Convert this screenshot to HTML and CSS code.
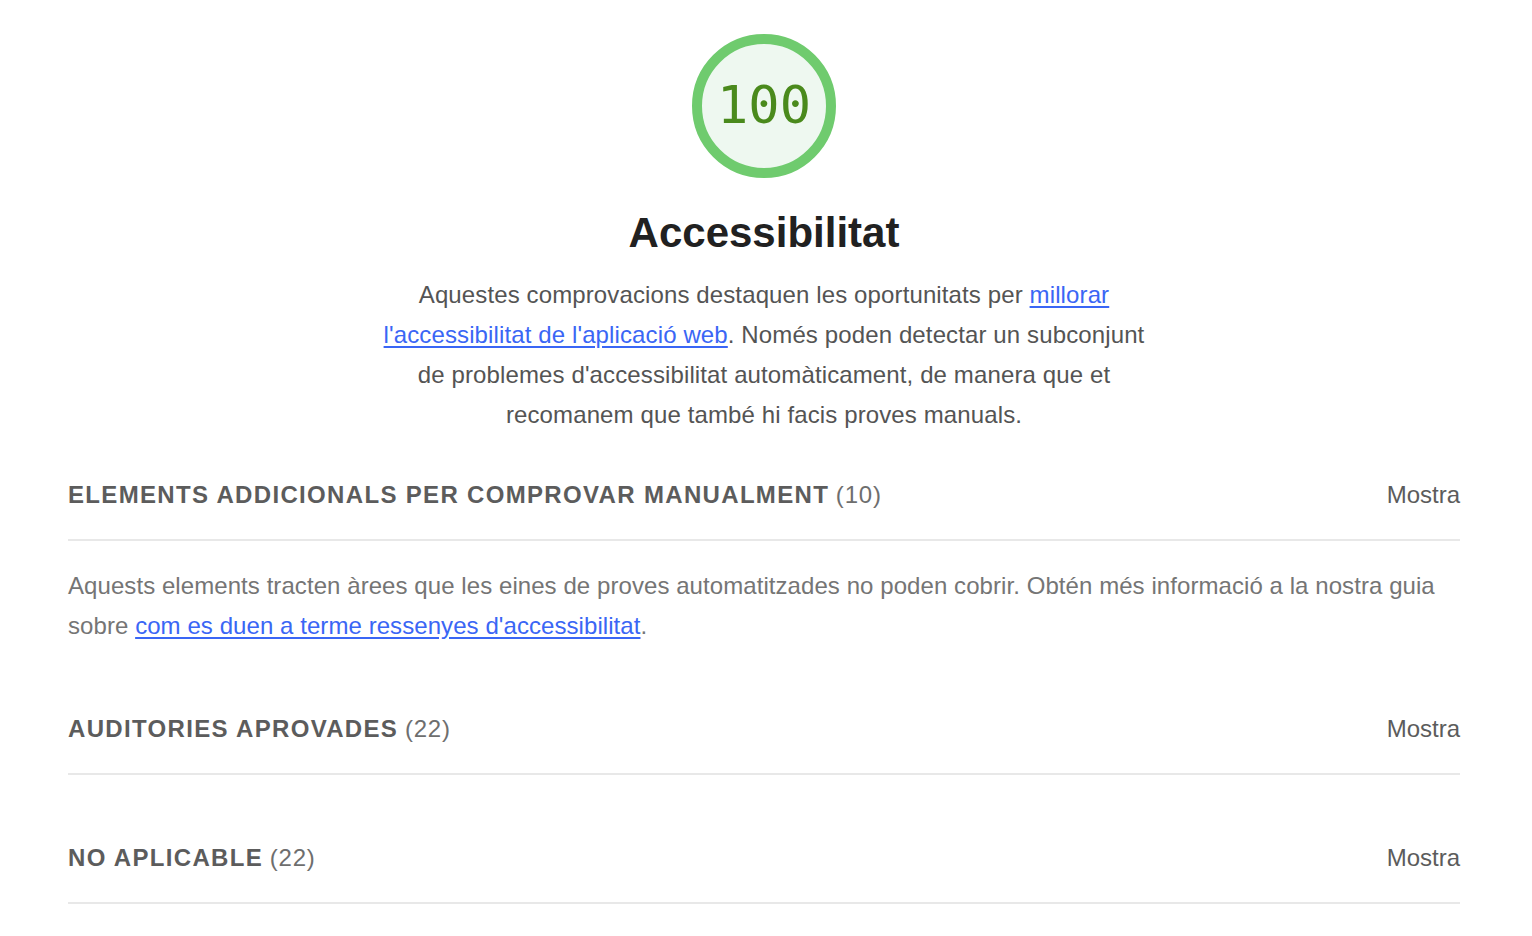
FILE: index.html
```html
<!DOCTYPE html>
<html lang="ca">
<head>
<meta charset="utf-8">
<title>Accessibilitat</title>
<link rel="stylesheet" href="styles.css">
</head>
<body>
<main class="category">
  <header class="category-header">
    <svg class="gauge" width="144" height="144" viewBox="0 0 144 144" aria-label="100">
      <circle cx="72" cy="72" r="67" class="gauge-base"></circle>
      <text x="72" y="89" class="gauge-pct">100</text>
    </svg>
    <h1 class="category-title">Accessibilitat</h1>
    <p class="category-desc">Aquestes comprovacions destaquen les oportunitats per <a href="#">millorar l'accessibilitat de l'aplicació web</a>. Només poden detectar un subconjunt de problemes d'accessibilitat automàticament, de manera que et recomanem que també hi facis proves manuals.</p>
  </header>

  <section class="group">
    <div class="group-header">
      <span class="group-title"><span class="group-name">Elements addicionals per comprovar manualment</span> <span class="group-count">(10)</span></span>
      <span class="group-toggle">Mostra</span>
    </div>
    <p class="group-desc">Aquests elements tracten àrees que les eines de proves automatitzades no poden cobrir. Obtén més informació a la nostra guia sobre <a href="#">com es duen a terme ressenyes d'accessibilitat</a>.</p>
  </section>

  <section class="group">
    <div class="group-header">
      <span class="group-title"><span class="group-name">Auditories aprovades</span> <span class="group-count">(22)</span></span>
      <span class="group-toggle">Mostra</span>
    </div>
  </section>

  <section class="group">
    <div class="group-header">
      <span class="group-title"><span class="group-name">No aplicable</span> <span class="group-count">(22)</span></span>
      <span class="group-toggle">Mostra</span>
    </div>
  </section>
</main>
</body>
</html>
```

FILE: styles.css
```css
html, body {
  margin: 0;
  padding: 0;
  background: #ffffff;
}

body {
  font-family: "Liberation Sans", Arial, Helvetica, sans-serif;
  color: #212121;
}

.category {
  padding: 34px 72px 40px 68px;
  display: flex;
  flex-direction: column;
}

.category-header {
  display: flex;
  flex-direction: column;
  align-items: center;
  text-align: center;
}

.gauge {
  display: block;
}

.gauge-base {
  fill: #eef8f0;
  stroke: #6fcb6e;
  stroke-width: 10;
}

.gauge-pct {
  font-family: "DejaVu Sans Mono", "Liberation Mono", monospace;
  font-size: 52px;
  fill: #4a8a1c;
  text-anchor: middle;
}

.category-title {
  margin: 31px 0 0;
  font-size: 42px;
  line-height: 48px;
  font-weight: 700;
  color: #212121;
}

.category-desc {
  margin: 18px 0 0;
  max-width: 782px;
  font-size: 24px;
  line-height: 40px;
  letter-spacing: 0.12px;
  color: #545454;
}

a {
  color: #3a66f5;
  text-decoration: underline;
  text-underline-offset: 3px;
}

.group {
  margin-top: 43px;
}

.category-header + .group {
  margin-top: 20px;
}

.group-header {
  display: flex;
  justify-content: space-between;
  align-items: center;
  padding: 20px 0 24px;
  border-bottom: 2px solid #e8e8e8;
  font-size: 24px;
  line-height: 40px;
}

.group-name {
  text-transform: uppercase;
  font-weight: 700;
  letter-spacing: 1.33px;
  color: #5c5c5c;
}

.group-count {
  color: #6e6e6e;
  letter-spacing: 0.8px;
}

.group-toggle {
  color: #5c5c5c;
}

.group-desc {
  margin: 25px 0 0;
  font-size: 24px;
  line-height: 40px;
  letter-spacing: 0.07px;
  color: #757575;
}
```
